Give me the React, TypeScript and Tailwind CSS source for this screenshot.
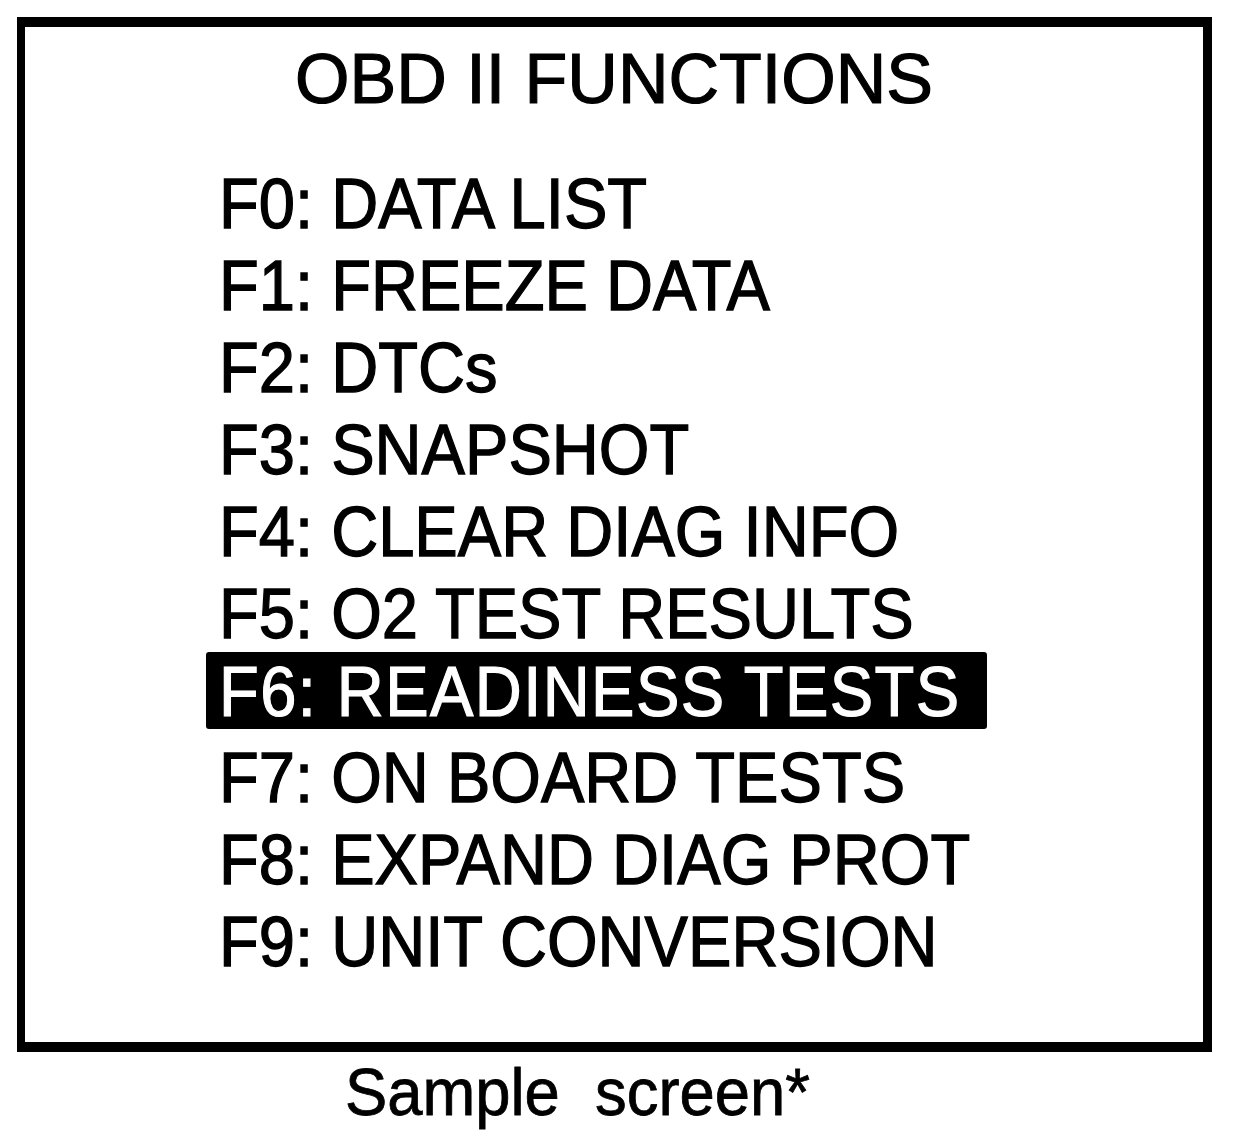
const functions = [
  "F0: DATA LIST",
  "F1: FREEZE DATA",
  "F2: DTCs",
  "F3: SNAPSHOT",
  "F4: CLEAR DIAG INFO",
  "F5: O2 TEST RESULTS",
  "F6: READINESS TESTS",
  "F7: ON BOARD TESTS",
  "F8: EXPAND DIAG PROT",
  "F9: UNIT CONVERSION",
]

const selected = 6

export default function App() {
  return (
    <div className="min-h-[1140px] w-[1248px] bg-white pl-[17px] pt-[17px] text-black [font-family:'Liberation_Sans',Arial,sans-serif]">
      <div className="h-[1035px] w-[1195px] border-t-[10px] border-r-[9px] border-b-[10px] border-l-8 border-black">
        <h1 className="pt-[17px] text-center text-[70px] leading-[70px] font-normal [-webkit-text-stroke:1.2px_black]">
          OBD II FUNCTIONS
        </h1>
        <ul className="mt-[49px] pl-[194px]">
          {functions.map((label, i) =>
            i === selected ? (
              <li key={label} className="flex h-[82px] items-start">
                <div className="-mt-[3px] -ml-[13px] h-[77px] w-[781px] rounded-[3px] bg-black pl-[13px] text-white">
                  <span className="block origin-left scale-x-[0.93] text-[70px] leading-[81px] tracking-[1.5px] whitespace-nowrap [-webkit-text-stroke:1.2px_white]">
                    {label}
                  </span>
                </div>
              </li>
            ) : (
              <li key={label} className="h-[82px]">
                <span className="block origin-left scale-x-[0.93] text-[70px] leading-[82px] whitespace-nowrap [-webkit-text-stroke:1.3px_black]">
                  {label}
                </span>
              </li>
            )
          )}
        </ul>
      </div>
      <p className="mt-[7px] pl-[328px]">
        <span className="block origin-left scale-x-[0.96] text-[66px] leading-[66px] whitespace-pre [-webkit-text-stroke:0.8px_black]">
          {"Sample  screen*"}
        </span>
      </p>
    </div>
  )
}
